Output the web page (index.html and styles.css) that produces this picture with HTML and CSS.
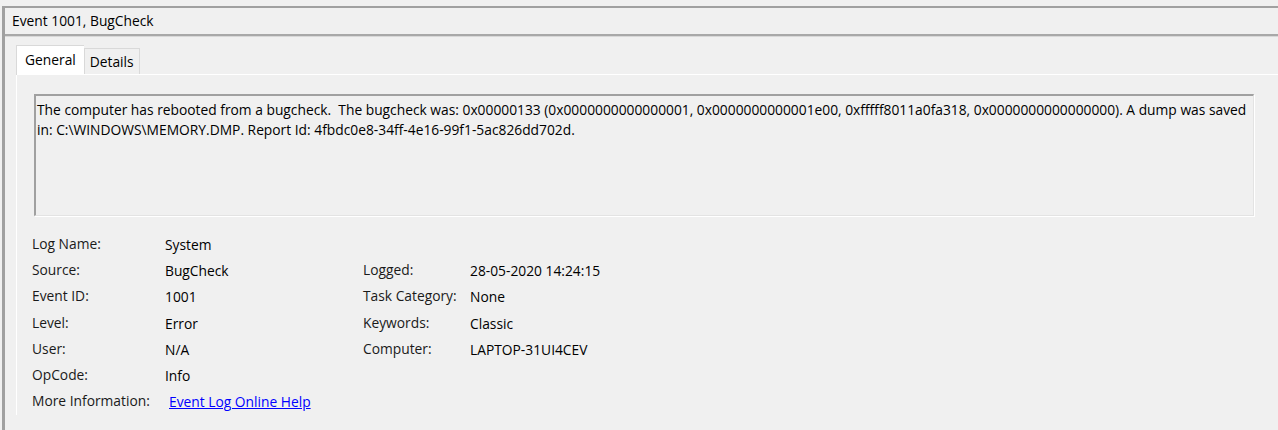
FILE: index.html
```html
<!DOCTYPE html>
<html>
<head>
<meta charset="utf-8">
<link rel="stylesheet" href="styles.css">
</head>
<body>
<div class="pane">
  <div class="header">Event 1001, BugCheck</div>
  <div class="tabs">
    <div class="tab active">General</div>
    <div class="tab">Details</div>
    <div class="tab-fill"></div>
  </div>
  <div class="panel">
    <div class="desc">
      <div class="line">The computer has rebooted from a bugcheck.&nbsp; The bugcheck was: 0x00000133 (0x0000000000000001, 0x0000000000001e00, 0xfffff8011a0fa318, 0x0000000000000000). A dump was saved</div>
      <div class="line">in: C:\WINDOWS\MEMORY.DMP. Report Id: 4fbdc0e8-34ff-4e16-99f1-5ac826dd702d.</div>
    </div>
    <div class="fields">
      <div class="lbl">Log Name:</div><div class="val">System</div><div></div><div></div>
      <div class="lbl">Source:</div><div class="val">BugCheck</div><div class="lbl">Logged:</div><div class="val">28-05-2020 14:24:15</div>
      <div class="lbl">Event ID:</div><div class="val">1001</div><div class="lbl">Task Category:</div><div class="val">None</div>
      <div class="lbl">Level:</div><div class="val">Error</div><div class="lbl">Keywords:</div><div class="val">Classic</div>
      <div class="lbl">User:</div><div class="val">N/A</div><div class="lbl">Computer:</div><div class="val">LAPTOP-31UI4CEV</div>
      <div class="lbl">OpCode:</div><div class="val">Info</div><div></div><div></div>
      <div class="lbl">More Information:</div><div class="val"><a class="link" href="#">Event Log Online Help</a></div><div></div><div></div>
    </div>
  </div>
</div>
</body>
</html>
```
FILE: styles.css
```css
html, body {
  margin: 0;
  padding: 0;
  background: #f0f0f0;
  height: 430px;
  overflow: hidden;
}
body {
  font-family: "Open Sans", "Noto Sans", sans-serif;
  font-size: 13.8px;
  color: #000;
}
.pane {
  margin: 6px 0 0 2px;
  border-top: 2px solid #a0a0a0;
  border-left: 3px solid #a0a0a0;
  height: 430px;
}
.header {
  height: 26px;
  line-height: 26px;
  padding-left: 7px;
  border-bottom: 2px solid #a8a8a8;
  box-shadow: 0 1px 0 #d8d8d8;
}
.tabs {
  display: flex;
  align-items: flex-end;
  margin-top: 8px;
  padding-left: 11px;
  height: 30px;
}
.tab {
  height: 25px;
  line-height: 25px;
  padding: 0 5px;
  border: 1px solid #d9d9d9;
  border-bottom: none;
  background: #f0f0f0;
}
.tab.active {
  height: 29px;
  line-height: 27px;
  padding: 0 8px;
  background: #ffffff;
  border-color: #d9d9d9;
  border-right: none;
  margin-bottom: -1px;
  position: relative;
  z-index: 1;
}
.tab-fill {
  flex: 1;
}
.panel {
  margin-left: 11px;
  border-left: 1px solid #ffffff;
  border-top: 1px solid #ffffff;
  padding: 19px 24px 0 17px;
}
.desc {
  height: 115px;
  border-top: 2px solid #a0a0a0;
  border-left: 2px solid #a0a0a0;
  border-bottom: 1px solid #e3e3e3;
  border-right: 1px solid #e3e3e3;
  box-shadow: 1px 1px 0 #ffffff;
  padding: 4px 0 0 1px;
}
.line {
  white-space: nowrap;
  line-height: 20px;
}
.fields {
  display: grid;
  grid-template-columns: 133px 198px 107px auto;
  grid-auto-rows: 26.2px;
  margin-top: 16px;
  margin-left: -2px;
}
.lbl {
  line-height: 24px;
  color: #1a1a1a;
}
.val {
  line-height: 26px;
  padding-top: 0;
}
.link {
  color: #0000ff;
  text-decoration: underline;
  margin-left: 4px;
}
```
